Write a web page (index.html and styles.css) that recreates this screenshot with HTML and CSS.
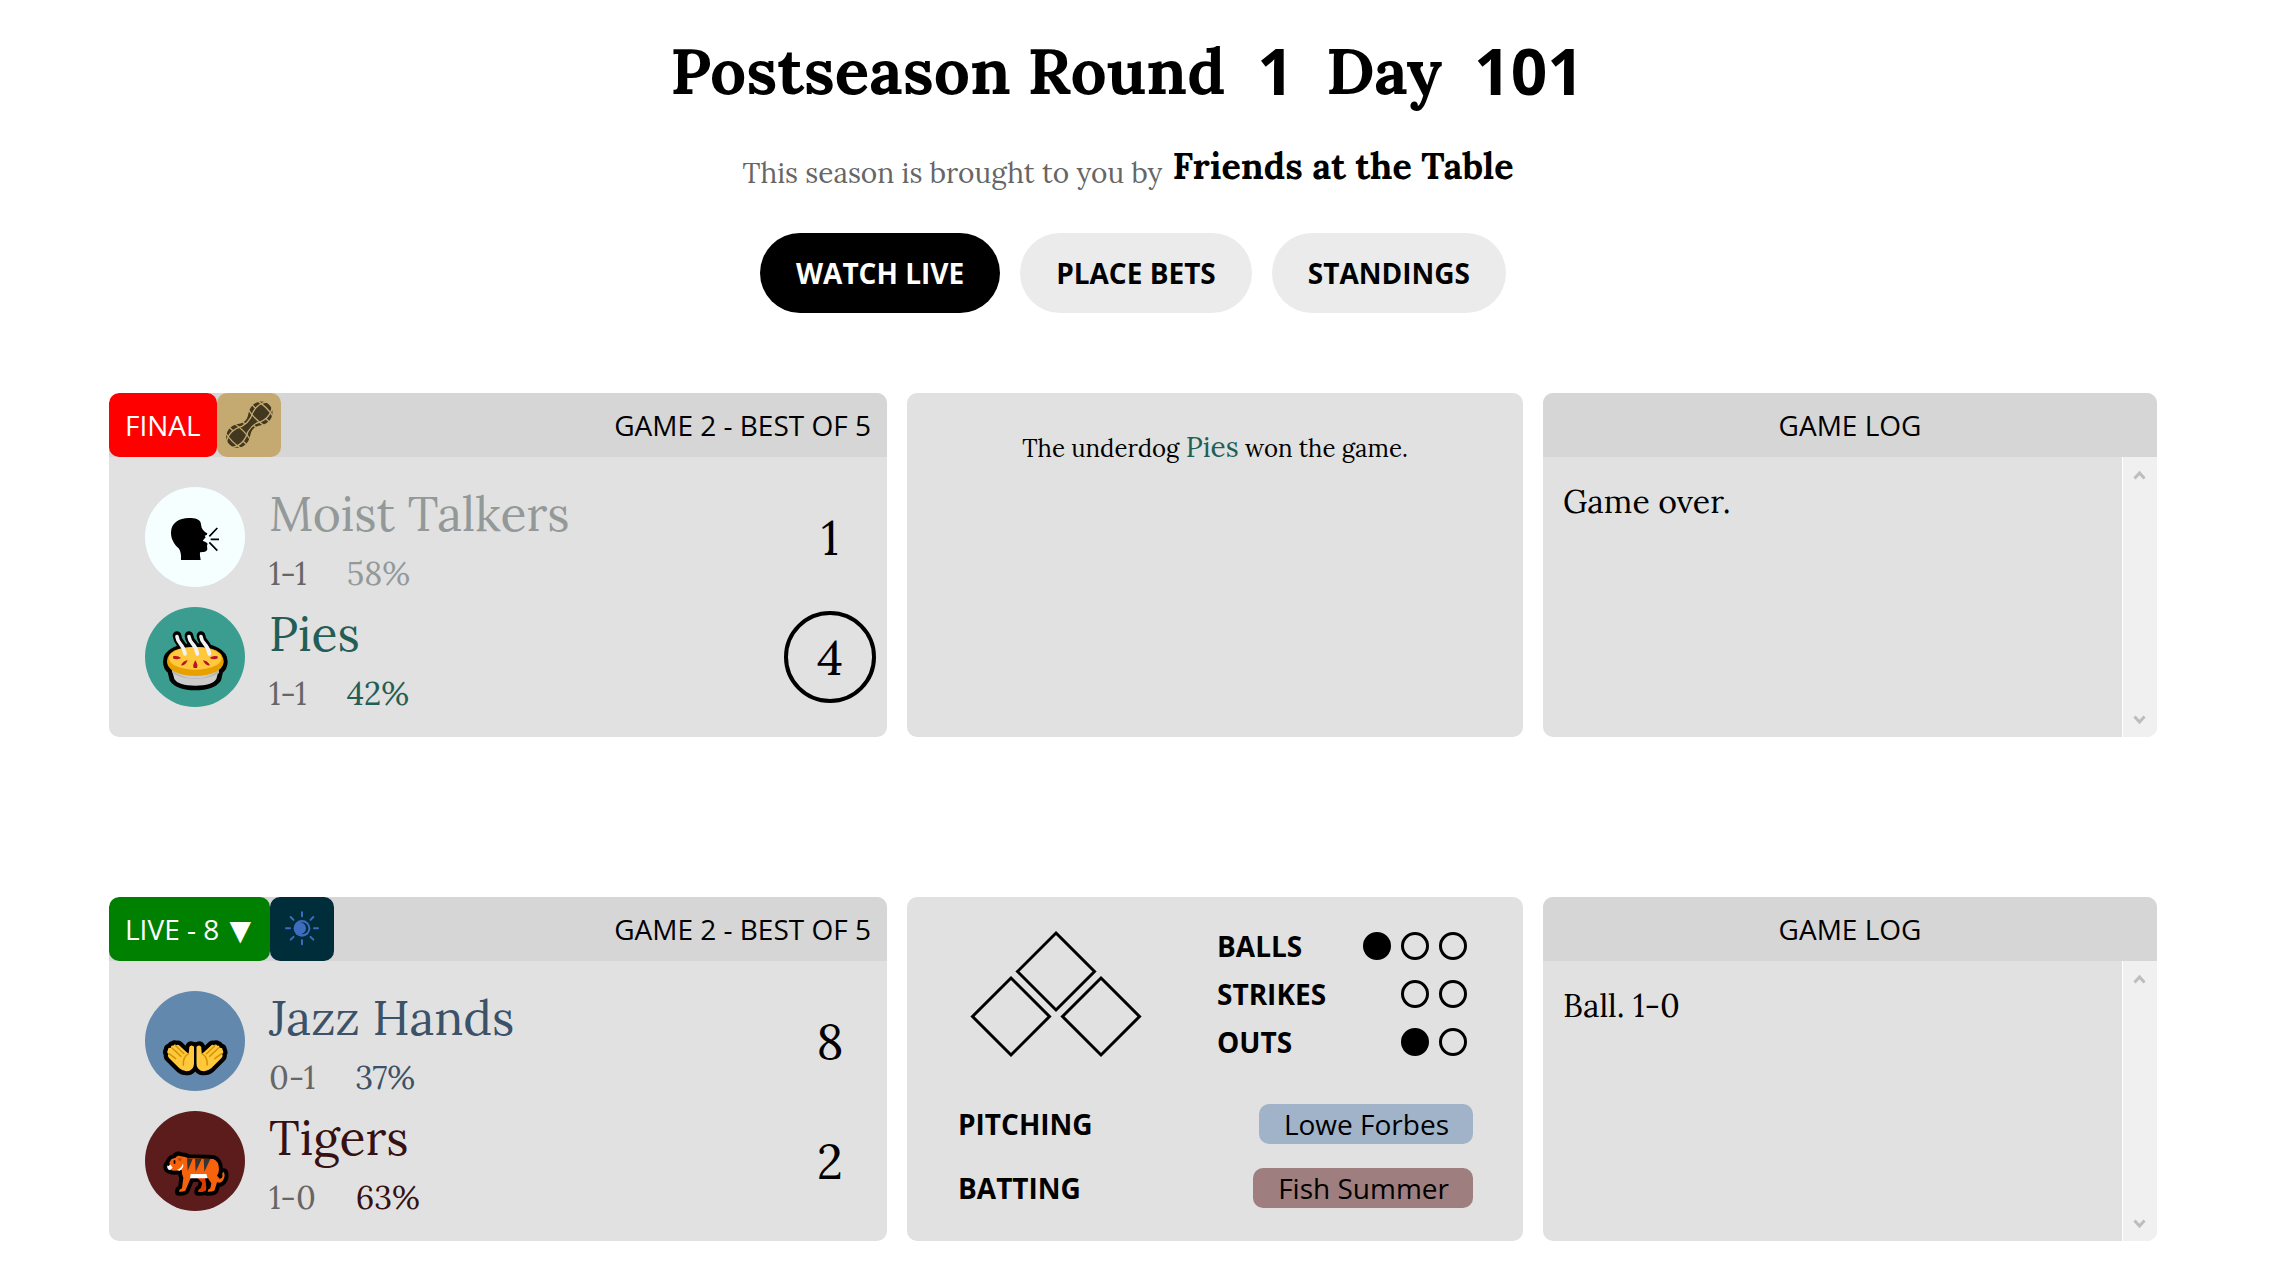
FILE: index.html
```html
<!DOCTYPE html>
<html lang="en">
<head>
<meta charset="utf-8">
<title>Postseason</title>
<link rel="stylesheet" href="styles.css">
</head>
<body>
<main class="page">
  <h1 class="title"><span>Postseason Round</span><span class="num">1</span><span>Day</span><span class="num">101</span></h1>
  <p class="sponsor"><span class="sponsor-lead">This season is brought to you by</span><span class="sponsor-name">Friends at the Table</span></p>
  <nav class="tabs">
    <a class="tab tab-active">WATCH LIVE</a>
    <a class="tab">PLACE BETS</a>
    <a class="tab">STANDINGS</a>
  </nav>

  <section class="game">
    <article class="card">
      <header class="bar">
        <span class="status status-final">FINAL</span>
        <span class="weather weather-peanut">
          <svg viewBox="0 0 192 192" width="64" height="64">
            <g transform="translate(97 95) rotate(-45)">
              <path fill="#42371f" d="M-84 0C-84-22-66-35-46-34C-24-33-18-17 0-17C18-17 24-33 46-34C66-35 84-22 84 0C84 22 66 35 46 34C24 33 18 17 0 17C-18 17-24 33-46 34C-66 35-84 22-84 0Z"/>
              <g fill="none" stroke="#c4aa70" stroke-width="4">
                <path d="M-88-10C-66-26-40-24-18-12Q0-7 18-12C40-24 66-26 88-10M-88 10C-66 26-40 24-18 12Q0 7 18 12C40 24 66 26 88 10"/>
                <path d="M-67-36Q-76 0-67 36M-30-36Q-22 0-30 36M30-36Q22 0 30 36M67-36Q76 0 67 36M-48-36V-22M-48 36V22M48-36V-22M48 36V22M-8-22V-10M8 22V10"/>
              </g>
            </g>
          </svg>
        </span>
        <span class="series">GAME 2 - BEST OF 5</span>
      </header>
      <div class="teams">
        <div class="team talkers">
          <svg class="emblem" viewBox="0 0 300 300">
            <path d="M78 137C78 108 102 93 132 93C150 93 164 97 167 107L170 122C174 131 181 135 187 139L185 144L179 146L182 151L173 161L183 166L188 170L186 176L187 187C184 196 175 195 165 196C164 204 166 212 167 219H108C109 204 107 192 101 184C89 173 78 158 78 137Z"/>
            <path fill="none" stroke="#000" stroke-width="5" d="M193 148L217 123M197 157H222M193 166L217 191"/>
          </svg>
          <div class="info"><div class="name">Moist Talkers</div><div class="record"><span>1-1</span><span class="odds">58%</span></div></div>
          <div class="score">1</div>
        </div>
        <div class="team pies">
          <svg class="emblem" viewBox="0 0 300 300">
            <g stroke="#000" stroke-width="26" stroke-linejoin="round" stroke-linecap="round">
              <path d="M67 164C67 138 100 122 151 122S235 138 235 164Q235 180 222 190L216 215Q200 237 151 237T86 215L80 190Q67 180 67 164Z"/>
              <path fill="none" d="M96 86C99 112 116 107 120 141M132 86C135 112 153 107 157 141M168 86C171 112 189 107 193 141"/>
            </g>
            <path fill="#ccc" d="M79 183L88 216Q100 236 151 236T214 216L223 183Z"/>
            <path fill="#b5b5b5" d="M80 188Q110 214 151 214T222 188V199Q190 216 151 216T83 199Z"/>
            <path fill="#e8a000" d="M66 163Q68 120 151 120T236 163C236 190 200 207 151 207S66 190 66 163Z"/>
            <ellipse cx="151" cy="154" rx="79" ry="34" fill="#ffc83d"/>
            <g fill="#b81422">
              <path d="M84 148Q98 144 108 153Q94 160 84 154ZM218 148Q204 144 194 153Q208 160 218 154ZM128 160Q114 162 108 175Q121 178 128 160ZM174 160Q188 162 195 175Q181 178 174 160ZM151 160Q142 174 146 183H156Q160 174 151 160Z"/>
            </g>
            <path fill="none" stroke="#f2f2f2" stroke-width="11" stroke-linecap="round" d="M96 89C99 114 116 109 120 141M132 89C135 114 153 109 157 141M168 89C171 114 189 109 193 141"/>
          </svg>
          <div class="info"><div class="name">Pies</div><div class="record"><span>1-1</span><span class="odds">42%</span></div></div>
          <div class="score winner">4</div>
        </div>
      </div>
    </article>
    <article class="card outcome">
      <p>The underdog <span class="outcome-team">Pies</span> won the game.</p>
    </article>
    <article class="card">
      <header class="bar bar-center">GAME LOG</header>
      <div class="log">
        <p class="entry">Game over.</p>
        <div class="scroll">
          <svg width="13" height="10" viewBox="0 0 13 10"><path d="M1.500 8.500L6.500 3L11.500 8.500"/></svg>
          <svg width="13" height="10" viewBox="0 0 13 10"><path d="M1.500 1.500L6.500 7L11.500 1.500"/></svg>
        </div>
      </div>
    </article>
  </section>

  <section class="game">
    <article class="card">
      <header class="bar">
        <span class="status status-live">LIVE - 8 <span class="half">▼</span></span>
        <span class="weather weather-eclipse">
          <svg viewBox="0 0 192 192" width="64" height="64">
            <circle cx="96" cy="94" r="25" fill="#3e6dbf"/>
            <circle cx="97" cy="94" r="18" fill="#002d3a"/>
            <circle cx="90" cy="94" r="18" fill="#3e6dbf"/>
            <path fill="none" stroke="#3e6dbf" stroke-width="6" stroke-linecap="round" d="M96 58V46M96 130V142M132 94H144M60 94H48M121.500 68.500L130 60M70.500 68.500L62 60M121.500 119.500L130 128M70.500 119.500L62 128"/>
          </svg>
        </span>
        <span class="series">GAME 2 - BEST OF 5</span>
      </header>
      <div class="teams">
        <div class="team jazz">
          <svg class="emblem" viewBox="0 0 300 300">
            <defs>
              <path id="palm" d="M147 169Q147 164 142 164Q136 162 133 168L131 188Q124 184 112 172L104 164Q98 159 95 163Q88 157 85 164Q77 162 78 170Q68 169 69 177Q64 184 70 189Q66 195 72 201L103 232Q117 244 134 239Q147 233 147 217Z"/>
              <path id="fingers" d="M92 164L117 188M81 171L108 196M72 188L92 203M131 188Q113 198 115 222"/>
            </defs>
            <g stroke="#000" stroke-width="25" stroke-linejoin="round">
              <use href="#palm"/><use href="#palm" transform="translate(301.500 0) scale(-1 1)"/>
            </g>
            <g fill="#ffc83d"><use href="#palm"/><use href="#palm" transform="translate(301.500 0) scale(-1 1)"/></g>
            <g fill="none" stroke="#d69400" stroke-width="4.500" stroke-linecap="round"><use href="#fingers"/><use href="#fingers" transform="translate(301.500 0) scale(-1 1)"/></g>
          </svg>
          <div class="info"><div class="name">Jazz Hands</div><div class="record"><span>0-1</span><span class="odds">37%</span></div></div>
          <div class="score">8</div>
        </div>
        <div class="team tigers">
          <svg class="emblem" viewBox="0 0 300 300">
            <defs>
              <path id="tiger" d="M67 166L79 145Q88 141 92 140Q97 131 108 136Q122 137 130 142L205 144Q222 150 222 176Q221 188 216 194L224 203Q234 204 232 190Q231 182 237 184Q242 198 232 211Q226 218 216 214L209 237Q206 243 188 242Q188 234 196 232L199 217L188 200H180L183 236Q180 243 160 242Q160 234 169 232L176 201H137L122 237Q120 243 102 242Q102 235 111 232L115 200Q110 190 110 177L90 179Q74 179 68 172Z"/>
            </defs>
            <use href="#tiger" stroke="#000" stroke-width="24" stroke-linejoin="round"/>
            <use href="#tiger" fill="#f7630c"/>
            <path fill="#da3b01" d="M157 201H180L184 230Q184 243 160 242Q160 234 168 232L172 216Z"/>
            <path fill="#343434" d="M126 142L143 144L128 180ZM150 144H170L152 182ZM176 144H196L178 182Z"/>
            <path fill="#fff" d="M137 189H184L188 202H135ZM95 177Q110 172 114 157Q118 172 104 179ZM67 161H77L83 170L75 177Q65 176 67 161Z"/>
            <path d="M65 159L74 156V163L68 166ZM86 148H91V158H86Z"/>
            <path fill="#b94700" d="M98 142H109Q111 150 106 151Q99 149 98 142Z"/>
          </svg>
          <div class="info"><div class="name">Tigers</div><div class="record"><span>1-0</span><span class="odds">63%</span></div></div>
          <div class="score">2</div>
        </div>
      </div>
    </article>
    <article class="card field">
      <div class="field-top">
        <svg class="bases" width="172" height="128" viewBox="0 0 172 128">
          <path d="M86 3L124.500 41.500L86 80L47.500 41.500ZM41 48L79.500 86.500L41 125L2.500 86.500ZM131 48L169.500 86.500L131 125L92.500 86.500Z"/>
        </svg>
        <div class="counts">
          <div class="count"><span>BALLS</span><span class="dots"><i class="dot on"></i><i class="dot"></i><i class="dot"></i></span></div>
          <div class="count"><span>STRIKES</span><span class="dots"><i class="dot"></i><i class="dot"></i></span></div>
          <div class="count"><span>OUTS</span><span class="dots"><i class="dot on"></i><i class="dot"></i></span></div>
        </div>
      </div>
      <div class="player"><span>PITCHING</span><span class="tag tag-jazz">Lowe Forbes</span></div>
      <div class="player"><span>BATTING</span><span class="tag tag-tigers">Fish Summer</span></div>
    </article>
    <article class="card">
      <header class="bar bar-center">GAME LOG</header>
      <div class="log">
        <p class="entry">Ball. 1-0</p>
        <div class="scroll">
          <svg width="13" height="10" viewBox="0 0 13 10"><path d="M1.500 8.500L6.500 3L11.500 8.500"/></svg>
          <svg width="13" height="10" viewBox="0 0 13 10"><path d="M1.500 1.500L6.500 7L11.500 1.500"/></svg>
        </div>
      </div>
    </article>
  </section>
</main>
</body>
</html>
```
FILE: styles.css
```css
* { box-sizing: border-box; }
body { margin: 0; background: #fff; color: #000; font-family: "Lora", serif; overflow: hidden; }
h1, p { margin: 0; }
svg { display: block; }

.page { width: 2048px; margin-left: 109px; padding-top: 30px; }

.title { display: flex; justify-content: center; gap: 32px; padding-right: 12px; font-size: 64px; line-height: 82px; font-weight: 700; }
.num { font-family: "Open Sans", sans-serif; }

.sponsor { display: flex; justify-content: center; gap: 10px; margin-top: 31px; padding-right: 10px; height: 48px; }
.sponsor-lead { font-size: 28px; line-height: 36px; color: #666; padding-top: 12px; }
.sponsor-name { font-size: 36px; line-height: 46px; font-weight: 700; }

.tabs { display: flex; justify-content: center; gap: 20px; margin-top: 42px; font: 700 28px/80px "Open Sans", sans-serif; }
.tab { height: 80px; padding: 0 36px; border-radius: 40px; background: #ebebeb; }
.tab-active { background: #000; color: #fff; }

.game { display: grid; grid-template-columns: 778px 616px 614px; gap: 20px; margin-top: 80px; }
.game + .game { margin-top: 160px; }
.card { height: 344px; border-radius: 10px; background: #e1e1e1; overflow: hidden; }

.bar { display: flex; height: 64px; background: #d6d6d6; font: 28px/64px "Open Sans", sans-serif; }
.bar-center { justify-content: center; }
.status { padding: 0 16px; border-radius: 10px; color: #fff; white-space: nowrap; }
.status-final { background: #f00; }
.status-live { width: 161px; background: #008000; }
.half { margin-left: 3px; font-family: "DejaVu Sans", sans-serif; }
.weather { width: 64px; border-radius: 10px; }
.weather-peanut { background: #c4aa70; }
.weather-eclipse { background: #002d3a; }
.series { margin-left: auto; padding-right: 16px; }

.teams { display: flex; flex-direction: column; gap: 20px; padding: 30px 11px 0 36px; }
.team { display: flex; height: 100px; }
.emblem { width: 100px; height: 100px; border-radius: 50%; }
.info { flex: 1; margin-left: 24px; }
.name { font-size: 48px; line-height: 53px; }
.record { display: flex; gap: 40px; margin-top: 13px; font-size: 32px; line-height: 41px; color: #666; }
.score { align-self: center; width: 92px; height: 92px; font-size: 48px; line-height: 94px; text-align: center; }
.winner { border: 4px solid #000; border-radius: 50%; line-height: 86px; }

.talkers .emblem { background: #f5ffff; }
.talkers .name, .talkers .odds { color: #939999; }
.pies .emblem { background: #3a9d8f; }
.pies .name, .pies .odds, .outcome-team { color: #235e56; }
.jazz .emblem { background: #6388ad; }
.jazz .name, .jazz .odds { color: #3b5268; }
.tigers .emblem { background: #5c1c1c; }
.tigers .name, .tigers .odds { color: #371111; }

.outcome { padding-top: 34px; text-align: center; font-size: 24px; line-height: 40px; }
.outcome-team { font-size: 28px; }

.log { display: flex; justify-content: space-between; height: 280px; }
.entry { padding: 24px 20px; font-size: 32px; line-height: 41px; }
.scroll { display: flex; flex-direction: column; justify-content: space-between; align-items: center; width: 35px; padding: 13px 1px 12px 0; background: #f0f0f0; border-left: 1px solid #fff; }
.scroll path { fill: none; stroke: #bdbdbd; stroke-width: 3px; }

.field { padding: 33px 50px 0 51px; font: 700 28px/40px "Open Sans", sans-serif; }
.field-top { display: flex; height: 150px; }
.bases { margin-left: 12px; fill: none; stroke: #000; stroke-width: 3px; }
.counts { width: 250px; margin-left: auto; margin-right: 6px; }
.count { display: flex; justify-content: space-between; align-items: center; height: 48px; line-height: 34px; }
.counts .count:first-child { margin-top: -8px; }
.dots { display: flex; gap: 10px; }
.dot { width: 28px; height: 28px; border: 3px solid #000; border-radius: 50%; }
.on { background: #000; }
.player { display: flex; justify-content: space-between; margin-top: 24px; }
.tag { height: 40px; padding: 0 24px 0 25px; border-radius: 10px; font-weight: 400; }
.tag-jazz { background: #a1b3c9; }
.tag-tigers { background: #9e7e7e; }
```
